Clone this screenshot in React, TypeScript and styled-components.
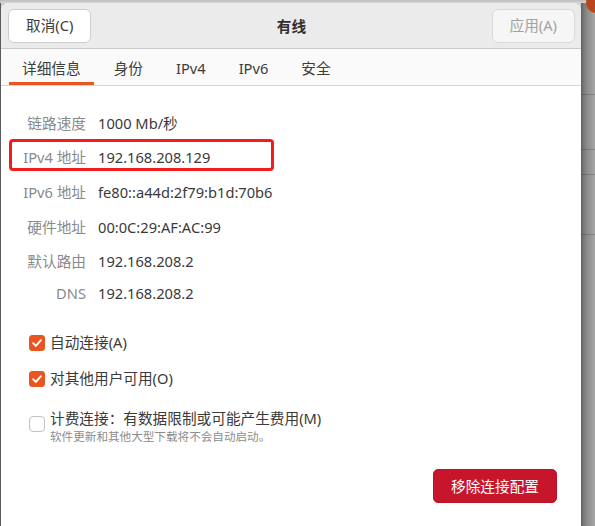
import React from "react";
import styled, { createGlobalStyle } from "styled-components";

const GlobalStyle = createGlobalStyle`
  html, body { margin: 0; padding: 0; }
  body {
    font-family: "Noto Sans", "Noto Sans CJK SC", sans-serif;
    font-size: 14.67px;
    color: #3c3c3c;
  }
  #root { width: 595px; height: 526px; overflow: hidden; }
`;

const Backdrop = styled.div`
  position: relative;
  width: 595px;
  height: 526px;
  display: flex;
  flex-direction: column;
  overflow: hidden;
  background: #d2d2d2;
`;

const TopStrip = styled.div`
  flex: none;
  height: 3px;
  background: linear-gradient(to bottom, #bdbdbd, #d6d6d6);
`;

const Stage = styled.div`
  flex: 1;
  min-height: 0;
  display: flex;
`;

const LeftEdge = styled.div`
  flex: none;
  width: 1px;
  background: #5c5c5c;
`;

const Dialog = styled.div`
  flex: none;
  width: 580px;
  display: flex;
  flex-direction: column;
  background: #ffffff;
  border-radius: 8px 8px 0 0;
  overflow: hidden;
`;

const RightShade = styled.div`
  flex: 1;
  background:
    linear-gradient(to bottom,
      transparent 91px, rgba(0,0,0,0.18) 91px, rgba(0,0,0,0.18) 92px, transparent 92px,
      transparent 146px, rgba(0,0,0,0.18) 146px, rgba(0,0,0,0.18) 147px, transparent 147px,
      transparent 171px, rgba(0,0,0,0.18) 171px, rgba(0,0,0,0.18) 172px, transparent 172px,
      transparent 231px, rgba(0,0,0,0.18) 231px, rgba(0,0,0,0.18) 232px, transparent 232px),
    linear-gradient(to right, #5e5e5e 0, #747474 2px, #8c8c8c 6px, #a6a6a6 100%);
`;

const CloseDot = styled.div`
  position: absolute;
  left: 586px;
  top: -7px;
  width: 20px;
  height: 20px;
  border-radius: 50%;
  background: #b8461f;
`;

const Header = styled.div`
  flex: none;
  height: 45px;
  display: grid;
  grid-template-columns: auto 1fr auto;
  align-items: center;
  padding: 0 6px 0 7px;
  background: #ebebeb;
  border-bottom: 1px solid #cbcbcb;
`;

const HeaderButton = styled.button<{ $disabled?: boolean }>`
  height: 34px;
  padding: 0 17px;
  border-radius: 6px;
  border: 1px solid ${(p) => (p.$disabled ? "#d9d9d9" : "#cdcdcd")};
  background: ${(p) => (p.$disabled ? "#f6f6f6" : "#ffffff")};
  color: ${(p) => (p.$disabled ? "#a2a2a2" : "#3c3c3c")};
  font-family: inherit;
  font-size: 14.67px;
  line-height: 1;
  cursor: default;
`;

const Title = styled.div`
  text-align: center;
  font-weight: 700;
  font-size: 14.67px;
  color: #2f2f2f;
`;

const TabBar = styled.div`
  flex: none;
  height: 36px;
  display: flex;
  gap: 7px;
  padding-left: 8px;
  background: #fafafa;
  border-bottom: 1px solid #d6d6d6;
`;

const Tab = styled.div<{ $active?: boolean }>`
  display: flex;
  align-items: center;
  padding: 5px 13px 0;
  border-bottom: 3px solid ${(p) => (p.$active ? "#e95420" : "transparent")};
  font-size: 14.67px;
  color: #3c3c3c;
  line-height: 1;
`;

const Content = styled.div`
  flex: 1;
  display: flex;
  flex-direction: column;
  padding-top: 20px;
`;

const InfoList = styled.div`
  display: flex;
  flex-direction: column;
`;

const InfoRow = styled.div<{ $h: number }>`
  position: relative;
  height: ${(p) => p.$h}px;
  display: grid;
  grid-template-columns: 85px 1fr;
  column-gap: 12px;
  align-items: center;
  line-height: 1.3;
`;

const InfoLabel = styled.span`
  text-align: right;
  color: #8a8a8a;
`;

const InfoValue = styled.span`
  color: #3a3a3a;
`;

const Highlight = styled.div`
  position: absolute;
  left: 8px;
  top: -1.5px;
  width: 265px;
  height: 32px;
  box-sizing: border-box;
  border: 3px solid #f11d1d;
  border-radius: 4px;
  pointer-events: none;
`;

const Checks = styled.div`
  display: flex;
  flex-direction: column;
  margin-top: 17.5px;
  padding-left: 28px;
`;

const CheckRow = styled.div`
  height: 36px;
  display: flex;
  align-items: center;
  gap: 5px;
  line-height: 1.3;
  color: #3a3a3a;
`;

const CheckRowTall = styled.div`
  display: flex;
  align-items: flex-start;
  gap: 5px;
  padding-top: 11px;
`;

const Box = styled.span<{ $checked?: boolean; $offset?: number }>`
  flex: none;
  width: 16px;
  height: 16px;
  box-sizing: border-box;
  margin-top: ${(p) => p.$offset ?? 0}px;
  border-radius: ${(p) => (p.$checked ? 3 : 4)}px;
  background: ${(p) => (p.$checked ? "#e95420" : "#ffffff")};
  border: 1px solid ${(p) => (p.$checked ? "#e95420" : "#c2c2c2")};
  display: flex;
  align-items: center;
  justify-content: center;
`;

const CheckText = styled.div`
  display: flex;
  flex-direction: column;
`;

const CheckTitle = styled.span`
  line-height: 20px;
  color: #3a3a3a;
`;

const CheckSub = styled.span`
  font-size: 11.6px;
  line-height: 17px;
  color: #8c8c8c;
`;

const Actions = styled.div`
  display: flex;
  justify-content: flex-end;
  padding: 24px 24px 0 0;
`;

const DangerButton = styled.button`
  height: 34px;
  padding: 0 17px;
  border-radius: 5px;
  border: 1px solid #b71428;
  background: #c7162b;
  color: #ffffff;
  font-family: inherit;
  font-size: 14.67px;
  line-height: 1;
  cursor: default;
`;

const Check = () => (
  <svg width="12" height="12" viewBox="0 0 12 12">
    <path d="M2.2 6.2 L4.9 8.9 L9.9 3.2" fill="none" stroke="#fff" strokeWidth="2" strokeLinecap="round" strokeLinejoin="round" />
  </svg>
);

const rows: { label: string; value: string; h: number; mark?: boolean }[] = [
  { label: "链路速度", value: "1000 Mb/秒", h: 34.6 },
  { label: "IPv4 地址", value: "192.168.208.129", h: 34.6, mark: true },
  { label: "IPv6 地址", value: "fe80::a44d:2f79:b1d:70b6", h: 34.6 },
  { label: "硬件地址", value: "00:0C:29:AF:AC:99", h: 34.6 },
  { label: "默认路由", value: "192.168.208.2", h: 34.6 },
  { label: "DNS", value: "192.168.208.2", h: 28.4 },
];

const tabs = ["详细信息", "身份", "IPv4", "IPv6", "安全"];

export default function App() {
  return (
    <>
      <GlobalStyle />
      <Backdrop>
        <TopStrip />
        <Stage>
          <LeftEdge />
          <Dialog>
            <Header>
              <HeaderButton>取消(C)</HeaderButton>
              <Title>有线</Title>
              <HeaderButton $disabled>应用(A)</HeaderButton>
            </Header>
            <TabBar>
              {tabs.map((t, i) => (
                <Tab key={t} $active={i === 0}>{t}</Tab>
              ))}
            </TabBar>
            <Content>
              <InfoList>
                {rows.map((r) => (
                  <InfoRow key={r.label} $h={r.h}>
                    <InfoLabel>{r.label}</InfoLabel>
                    <InfoValue>{r.value}</InfoValue>
                    {r.mark && <Highlight />}
                  </InfoRow>
                ))}
              </InfoList>
              <Checks>
                <CheckRow>
                  <Box $checked><Check /></Box>
                  <span>自动连接(A)</span>
                </CheckRow>
                <CheckRow>
                  <Box $checked><Check /></Box>
                  <span>对其他用户可用(O)</span>
                </CheckRow>
                <CheckRowTall>
                  <Box $offset={8} />
                  <CheckText>
                    <CheckTitle>计费连接：有数据限制或可能产生费用(M)</CheckTitle>
                    <CheckSub>软件更新和其他大型下载将不会自动启动。</CheckSub>
                  </CheckText>
                </CheckRowTall>
              </Checks>
              <Actions>
                <DangerButton>移除连接配置</DangerButton>
              </Actions>
            </Content>
          </Dialog>
          <RightShade />
        </Stage>
        <CloseDot />
      </Backdrop>
    </>
  );
}
